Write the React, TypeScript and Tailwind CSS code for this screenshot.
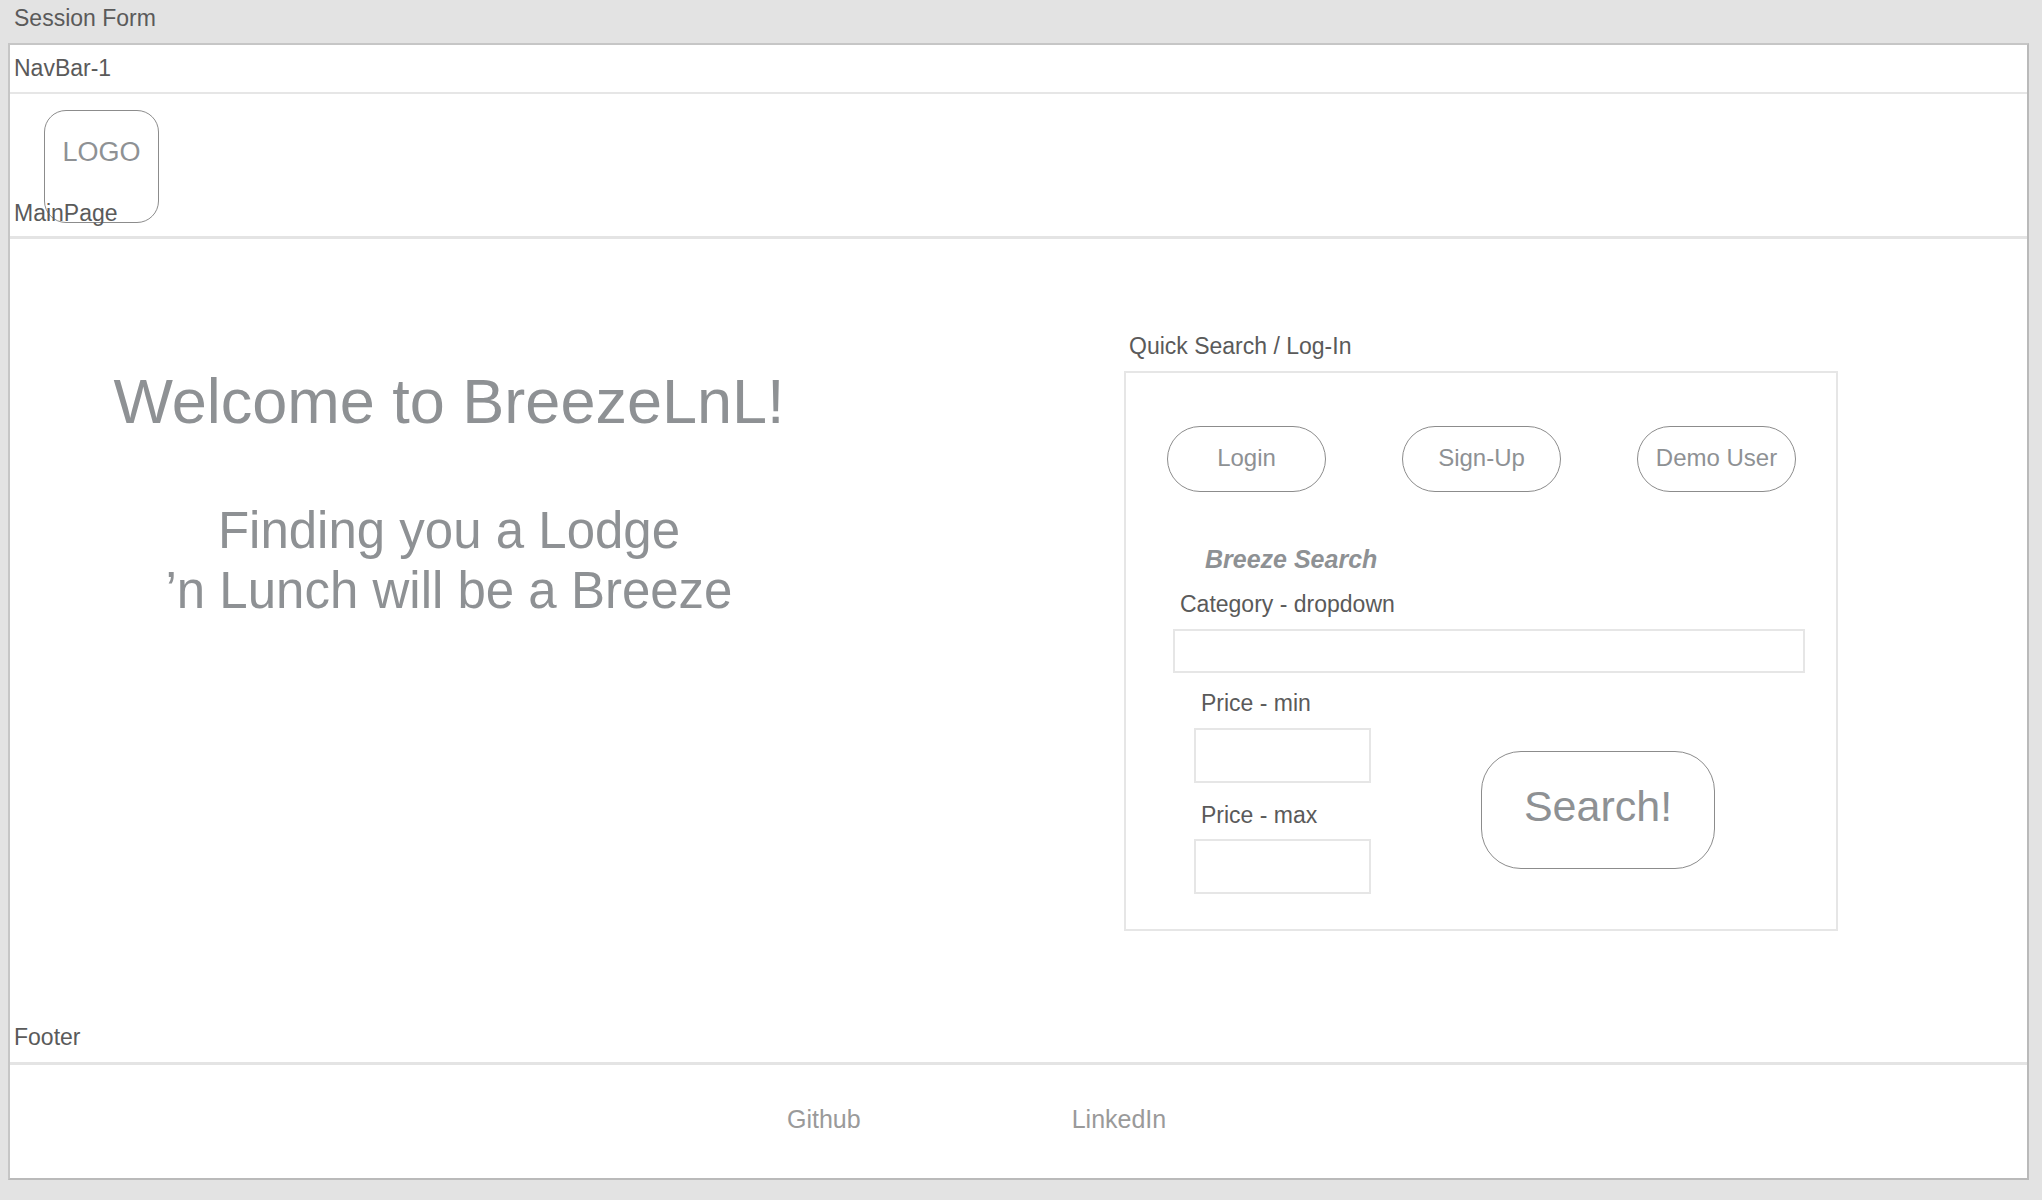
const label = "text-[23px] leading-[26px] text-[#5a5a5a]";
const gray = "text-[#8e9194]";

function PillButton({ children }: { children: string }) {
  return (
    <button className={`flex h-[66px] w-[159px] items-center justify-center rounded-full border border-[#8c8c8c] bg-white pb-[3px] text-[24px] ${gray}`}>
      {children}
    </button>
  );
}

function Field({ className }: { className: string }) {
  return <div className={`border-2 border-[#e6e6e6] bg-white ${className}`} />;
}

function SearchPanel() {
  return (
    <div className="ml-[236px] flex flex-col">
      <div className={`pl-[5px] ${label}`}>Quick Search / Log-In</div>
      <div className="mt-[12px] flex h-[560px] w-[714px] flex-col border-2 border-[#e6e6e6]">
        <div className="mt-[53px] flex gap-[76px] pl-[41px]">
          <PillButton>Login</PillButton>
          <PillButton>Sign-Up</PillButton>
          <PillButton>Demo User</PillButton>
        </div>
        <div className={`mt-[53px] pl-[79px] text-[25px] font-bold italic leading-[28px] ${gray}`}>Breeze Search</div>
        <div className={`mt-[18px] pl-[54px] ${label}`}>Category - dropdown</div>
        <Field className="ml-[47px] mt-[12px] h-[44px] w-[632px]" />
        <div className="mt-[17px] flex items-start">
          <div className="flex flex-col">
            <div className={`pl-[75px] ${label}`}>Price - min</div>
            <Field className="ml-[68px] mt-[12px] h-[55px] w-[177px]" />
            <div className={`mt-[19px] pl-[75px] ${label}`}>Price - max</div>
            <Field className="ml-[68px] mt-[11px] h-[55px] w-[177px]" />
          </div>
          <button className={`ml-[110px] mt-[61px] flex h-[118px] w-[234px] items-center justify-center rounded-[40px] border border-[#8c8c8c] bg-white pb-[8px] text-[43px] ${gray}`}>
            Search!
          </button>
        </div>
      </div>
    </div>
  );
}

export default function App() {
  return (
    <div className="h-[1200px] w-full bg-[#e3e3e3] font-['Liberation_Sans',Arial,sans-serif]">
      <div className={`h-[43px] pl-[14px] pt-[5px] ${label}`}>Session Form</div>
      <div className="ml-[8px] w-[2021px] border-2 border-[#c6c6c6] border-b-[#bababa] border-r-[#bababa] bg-white">
        <div className={`h-[49px] border-b-2 border-[#e6e6e6] pl-[4px] pt-[10px] ${label}`}>NavBar-1</div>
        <div className="relative h-[145px] border-b-[3px] border-[#e4e4e4] pl-[34px] pt-[16px]">
          <div className={`flex h-[113px] w-[115px] justify-center rounded-[22px] border border-[#8c8c8c] pt-[26px] text-[27px] leading-[31px] ${gray}`}>
            LOGO
          </div>
          <div className={`absolute left-[4px] top-[106px] ${label}`}>MainPage</div>
        </div>
        <div className="flex h-[826px] flex-col border-b-[3px] border-[#e4e4e4]">
          <div className="flex items-start pt-[94px]">
            <div className={`mt-[30px] w-[878px] text-center ${gray}`}>
              <div className="text-[63px] leading-[76px]">Welcome to BreezeLnL!</div>
              <div className="mt-[62px] text-[51px] leading-[60px]">
                <div>Finding you a Lodge</div>
                <div>’n Lunch will be a Breeze</div>
              </div>
            </div>
            <SearchPanel />
          </div>
          <div className={`mb-[12px] mt-auto pl-[4px] ${label}`}>Footer</div>
        </div>
        <div className="flex h-[113px] items-start pt-[40px] text-[25px] leading-[28px] text-[#9a9a9a]">
          <span className="ml-[777px]">Github</span>
          <span className="ml-[211px]">LinkedIn</span>
        </div>
      </div>
    </div>
  );
}
